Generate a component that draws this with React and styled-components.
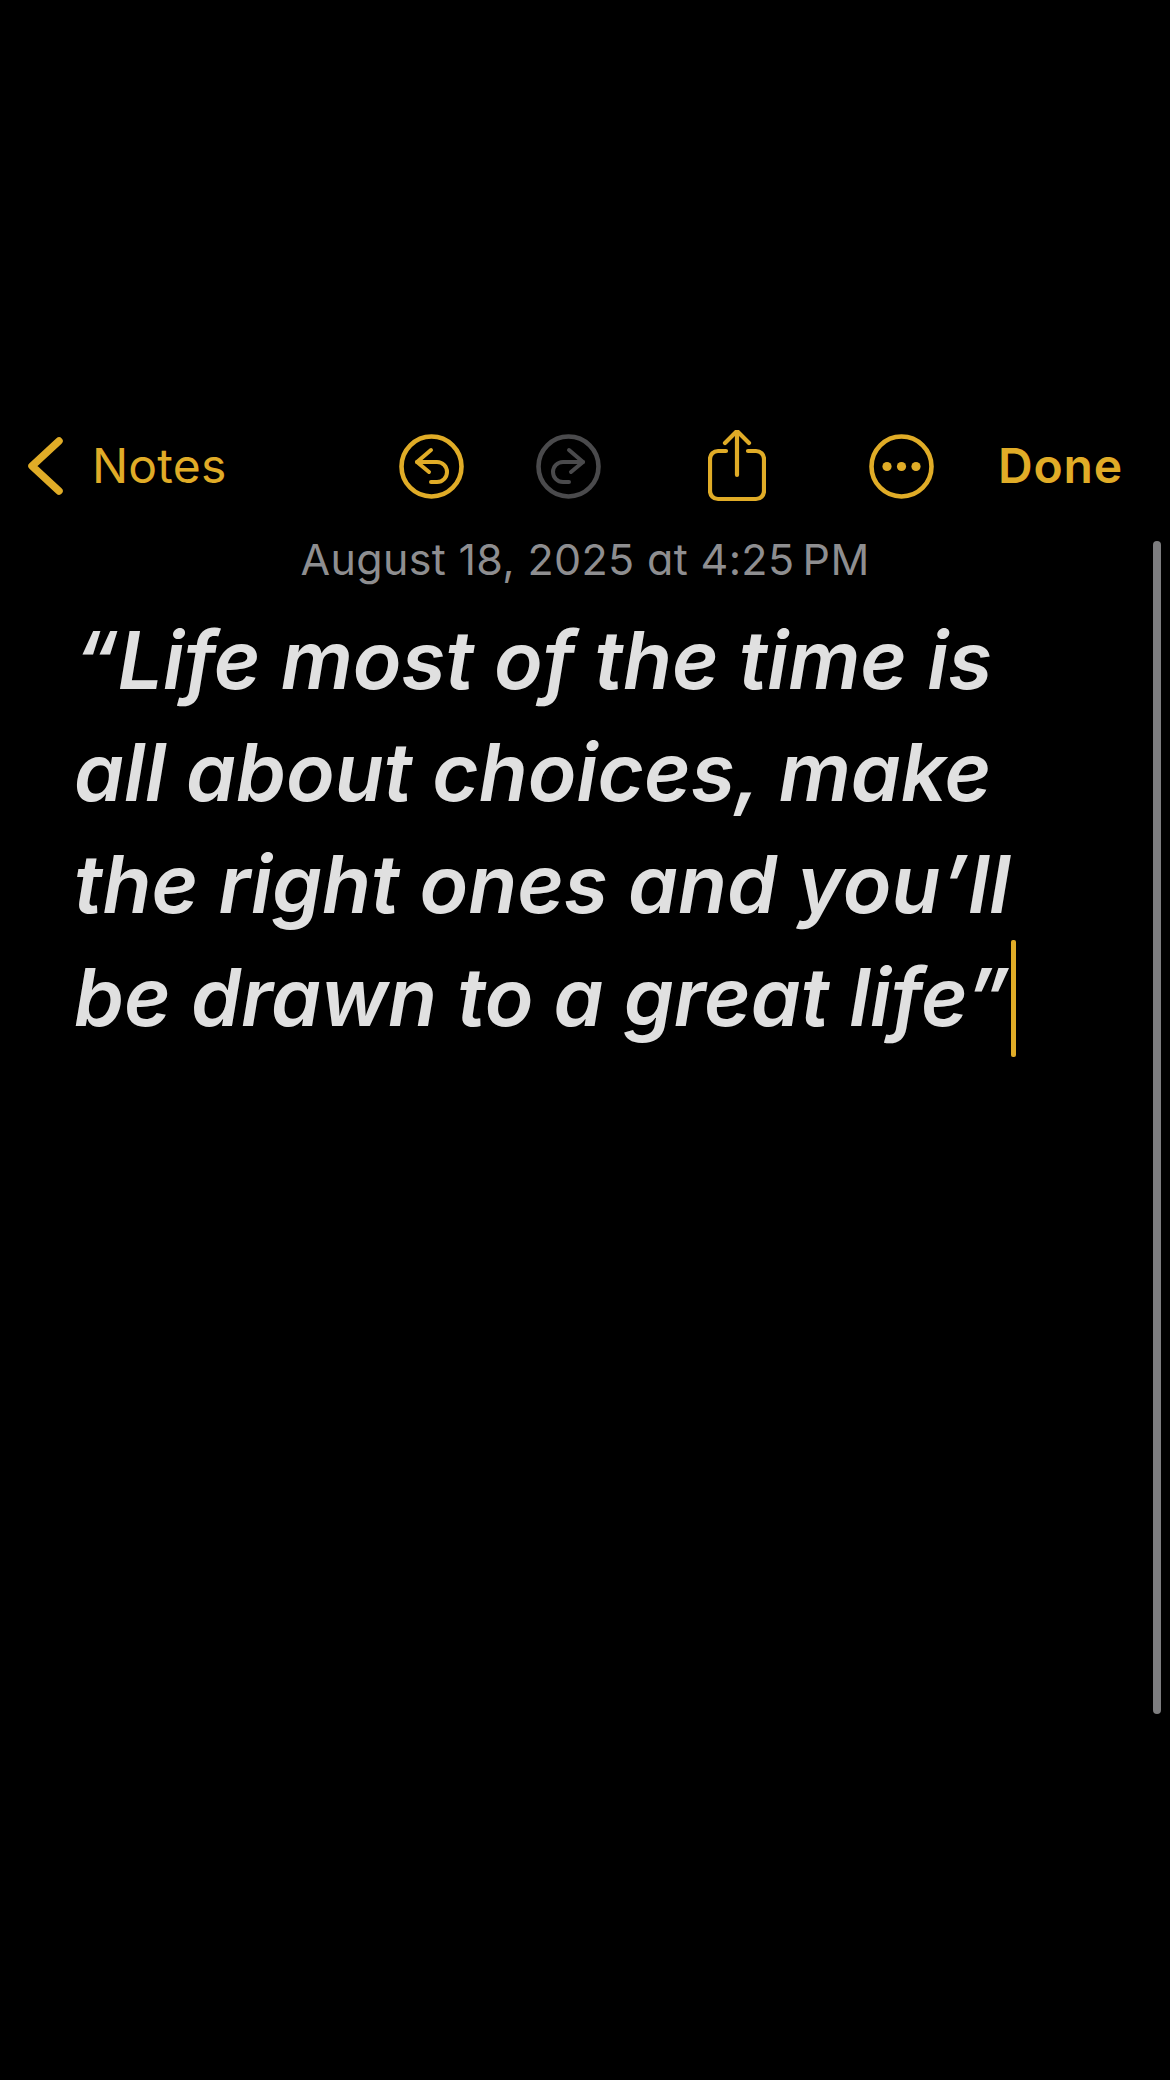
import React from 'react';
import styled, { createGlobalStyle } from 'styled-components';

const accent = '#e0ac27';

const GlobalStyle = createGlobalStyle`
  html, body {
    margin: 0;
    padding: 0;
    background: #000;
  }
`;

const Page = styled.div`
  position: relative;
  width: 1170px;
  height: 2080px;
  background: #000;
  font-family: Inter, "Noto Sans", sans-serif;
  font-feature-settings: 'cv11';
  overflow: hidden;
`;

const Toolbar = styled.div`
  display: grid;
  grid-template-columns: 371px 137px 172px 161px 129px auto;
  align-items: center;
  height: 90px;
  padding: 421px 0 0 28px;
`;

const Back = styled.div`
  display: flex;
  align-items: center;
  gap: 27px;
`;

const Label = styled.span`
  color: ${accent};
  font-size: 48px;
  line-height: 56px;
  font-weight: ${props => (props.$strong ? 600 : 400)};
  letter-spacing: ${props => (props.$strong ? '0.8px' : '0.2px')};
`;

const IconSvg = styled.svg`
  display: block;
  fill: none;
  stroke: ${props => props.$color || accent};
  stroke-linecap: round;
  stroke-linejoin: round;
`;

const DateLine = styled.div`
  margin-top: 23px;
  text-align: center;
  color: #8e8e90;
  font-size: 43px;
  line-height: 50px;
  font-weight: 400;
  letter-spacing: 0.34px;
`;

const Body = styled.div`
  margin-top: 20px;
  padding-left: 74px;
  color: #e0e0e0;
  font-size: 80px;
  line-height: 112px;
  font-weight: 640;
  font-style: italic;
`;

const Line = styled.div`
  white-space: nowrap;
`;

const Caret = styled.span`
  display: inline-block;
  width: 5px;
  height: 117px;
  margin-left: 2px;
  vertical-align: -31px;
  background: ${accent};
  border-radius: 2px;
`;

const Scrollbar = styled.div`
  position: absolute;
  left: 1153px;
  top: 541px;
  width: 8px;
  height: 1173px;
  background: #7d7d7f;
  border-radius: 4px;
`;

const Chevron = () => (
  <IconSvg width="37" height="60" viewBox="0 0 37 60" strokeWidth="7.5">
    <path d="M31 5 L4 30 L31 55" />
  </IconSvg>
);

const CircleArrow = ({ color, flip }) => (
  <IconSvg width="65" height="65" viewBox="0 0 65 65" strokeWidth="4" $color={color}>
    <circle cx="32.5" cy="32.5" r="30" strokeWidth="4.6" />
    <g transform={flip ? 'translate(65 0) scale(-1 1)' : undefined}>
      <path d="M18 28 H38 A10 10 0 0 1 38 48 H32" />
      <path d="M32 16 L18 28 L30 38" />
    </g>
  </IconSvg>
);

const Share = () => (
  <IconSvg width="58" height="72" viewBox="0 1 58 72" strokeWidth="4.2">
    <path d="M18 22 H10 A8 8 0 0 0 2 30 V62 A8 8 0 0 0 10 70 H48 A8 8 0 0 0 56 62 V30 A8 8 0 0 0 48 22 H40" />
    <path d="M29 46 V3" />
    <path d="M17 14 L29 2 L41 14" />
  </IconSvg>
);

const More = () => (
  <IconSvg width="65" height="65" viewBox="0 0 65 65" strokeWidth="4.6">
    <circle cx="32.5" cy="32.5" r="30" />
    <circle cx="18" cy="32.5" r="4.6" fill={accent} stroke="none" />
    <circle cx="32.5" cy="32.5" r="4.6" fill={accent} stroke="none" />
    <circle cx="47" cy="32.5" r="4.6" fill={accent} stroke="none" />
  </IconSvg>
);

const lines = [
  '“Life most of the time is',
  'all about choices, make',
  'the right ones and you’ll',
  'be drawn to a great life”',
];

const App = () => (
  <Page>
    <GlobalStyle />
    <Toolbar>
      <Back>
        <Chevron />
        <Label>Notes</Label>
      </Back>
      <CircleArrow />
      <CircleArrow color="#4a4a4c" flip />
      <Share />
      <More />
      <Label $strong>Done</Label>
    </Toolbar>
    <DateLine>August 18, 2025 at 4:25{'\u202f'}PM</DateLine>
    <Body>
      {lines.map((line, i) => (
        <Line key={line}>
          {line}
          {i === lines.length - 1 && <Caret />}
        </Line>
      ))}
    </Body>
    <Scrollbar />
  </Page>
);

export default App;
